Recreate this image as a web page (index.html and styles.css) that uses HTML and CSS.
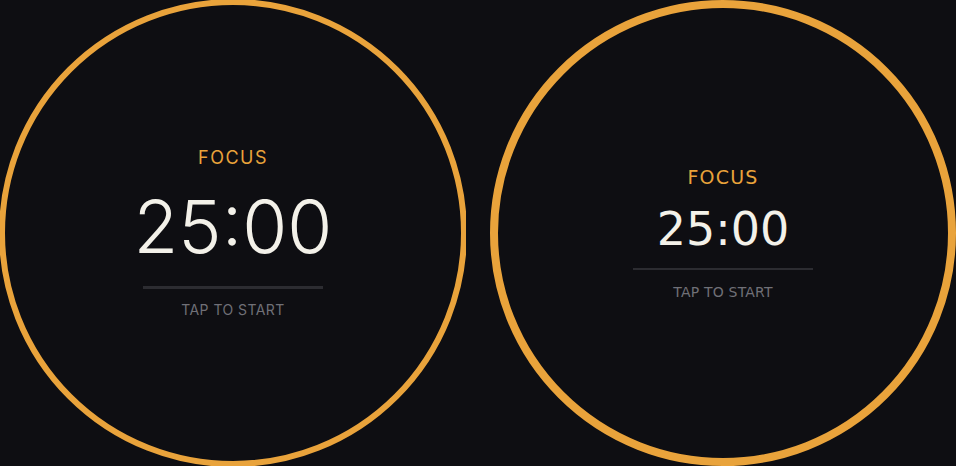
FILE: index.html
```html
<!DOCTYPE html>
<html>
<head>
<meta charset="utf-8">
<link rel="stylesheet" href="styles.css">
</head>
<body>
<main class="stage">
  <section class="panel panel-a">
    <div class="dial dial-a">
      <div class="label">FOCUS</div>
      <div class="time">25:00</div>
      <div class="rule"></div>
      <div class="hint">TAP TO START</div>
    </div>
  </section>
  <section class="panel panel-b">
    <div class="dial dial-b">
      <div class="label">FOCUS</div>
      <div class="time">25:00</div>
      <div class="rule"></div>
      <div class="hint">TAP TO START</div>
    </div>
  </section>
</main>
</body>
</html>
```
FILE: styles.css
```css
html, body {
  margin: 0;
  padding: 0;
  background: #0e0e12;
  width: 956px;
  height: 466px;
  overflow: hidden;
}
.stage {
  display: flex;
  gap: 24px;
  height: 466px;
}
.panel {
  width: 466px;
  height: 466px;
  overflow: hidden;
  display: flex;
  align-items: center;
  justify-content: center;
  flex: none;
}
.dial {
  box-sizing: border-box;
  border-radius: 50%;
  border-style: solid;
  border-color: #e9a33b;
  display: flex;
  flex-direction: column;
  align-items: center;
  justify-content: flex-start;
  flex: none;
}
.dial-a {
  width: 468px;
  height: 468px;
  border-width: 6px;
  padding-top: 142px;
  font-family: Inter, "Noto Sans", sans-serif;
}
.dial-b {
  width: 466px;
  height: 466px;
  border-width: 8px;
  padding-top: 158px;
  font-family: "DejaVu Sans", sans-serif;
}
.label {
  color: #e9a33b;
}
.time {
  color: #f3f1e9;
}
.rule {
  width: 180px;
  background: #2c2c31;
}
.hint {
  color: #707077;
}
.dial-a .label {
  font-size: 18px;
  line-height: 22px;
  letter-spacing: 1.5px;
}
.dial-a .time {
  font-size: 73px;
  font-weight: 300;
  line-height: 88px;
  margin-top: 14px;
}
.dial-a .rule {
  height: 3px;
  margin-top: 15px;
}
.dial-a .hint {
  font-size: 14px;
  line-height: 18px;
  letter-spacing: 0.45px;
  margin-top: 12px;
}
.dial-b .label {
  font-size: 19px;
  line-height: 22px;
  letter-spacing: 1.2px;
}
.dial-b .time {
  font-size: 46px;
  line-height: 56px;
  margin-top: 13px;
}
.dial-b .rule {
  height: 2px;
  margin-top: 11px;
}
.dial-b .hint {
  font-size: 14px;
  line-height: 16px;
  letter-spacing: 0.2px;
  margin-top: 14px;
}
```
